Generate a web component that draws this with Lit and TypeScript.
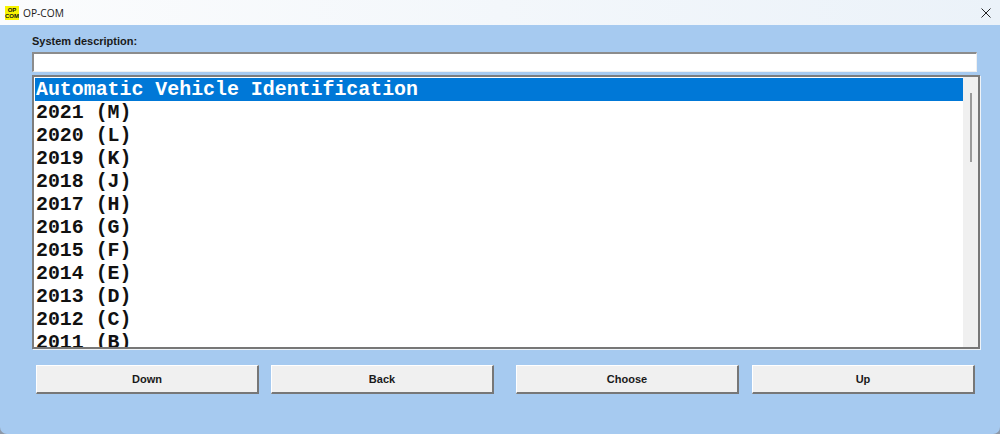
import { LitElement, html, css } from "lit";
import { customElement } from "lit/decorators.js";

const ROWS = ["Automatic Vehicle Identification", "2021 (M)", "2020 (L)", "2019 (K)", "2018 (J)", "2017 (H)", "2016 (G)", "2015 (F)", "2014 (E)", "2013 (D)", "2012 (C)", "2011 (B)"];

@customElement("app-root")
export class AppRoot extends LitElement {
  static styles = css`
    :host { display: block; width: 1000px; height: 434px; background: #8d99a8; overflow: hidden; font-family: "Liberation Sans", Arial, sans-serif; }
    .win { height: 434px; box-sizing: border-box; border-radius: 0 0 7px 7px; background: #a6caf0; display: flex; flex-direction: column; overflow: hidden; }
    .title { height: 25px; flex: none; background: linear-gradient(90deg, #fbfcfd, #ebf2f9); display: flex; align-items: center; padding-left: 5px; gap: 4px; font-family: "Open Sans", "Noto Sans", sans-serif; font-size: 10.2px; color: #1a1a1a; }
    .logo { width: 14px; height: 14px; background: #f8f400; color: #111; font: bold 6px/6px "Liberation Sans", sans-serif; text-align: center; overflow: hidden; display: flex; flex-direction: column; justify-content: center; }
    .close { margin-left: auto; width: 10px; height: 10px; margin-right: 9px; }
    .close svg { display: block; }
    .body { flex: 1; padding: 10px 20px 0 32px; display: flex; flex-direction: column; }
    label { font-size: 11px; font-weight: bold; color: #1a1a1a; line-height: 13px; height: 17px; display: block; }
    .input { height: 20px; width: 945px; box-sizing: border-box; background: #fff; border-top: 2px solid #8c8c8c; border-left: 2px solid #8c8c8c; border-right: 1px solid #f0f0f0; border-bottom: 1px solid #f0f0f0; }
    .list { margin-top: 3px; height: 274px; width: 948px; box-sizing: border-box; background: #fff; border: 2px solid #7d7d7d; border-right-color: #777; border-bottom-color: #777; box-shadow: 1px 1px 0 #eef3f8; padding: 1px 0 0 1px; display: flex; overflow: hidden; }
    .rows { flex: 1; min-width: 0; height: 100%; overflow: hidden; font: bold 19.9px/23px "Liberation Mono", "Courier New", monospace; color: #111; }
    .row { height: 23px; padding-left: 1px; white-space: pre; }
    .row.sel { background: #0078d7; color: #fff; }
    .scroll { width: 15px; flex: none; margin-top: -1px; background: #f0f0f0; display: flex; justify-content: center; padding-top: 16px; height: 100%; }
    .thumb { width: 2px; height: 69px; background: #9a9a9a; }
    .btns { margin-top: 16px; display: flex; padding-left: 4px; }
    button { width: 223px; height: 29px; box-sizing: border-box; background: #f0f0f0; border: 0; border-top: 1px solid #fff; border-left: 1px solid #fff; border-right: 2px solid #777; border-bottom: 2px solid #777; padding: 0; font: bold 11px "Liberation Sans", sans-serif; color: #1a1a1a; flex: none; }
    .g12 { width: 12px; flex: none; }
    .g22 { width: 22px; flex: none; }
    .g13 { width: 13px; flex: none; }
  `;

  render() {
    return html`
      <div class="win">
        <div class="title">
          <div class="logo"><span>OP</span><span>COM</span></div>
          <span>OP-COM</span>
          <div class="close"><svg width="10" height="10" viewBox="0 0 10 10"><path d="M0.5 0.5L9.5 9.5M9.5 0.5L0.5 9.5" stroke="#222" stroke-width="1" fill="none"/></svg></div>
        </div>
        <div class="body">
          <label>System description:</label>
          <div class="input"></div>
          <div class="list">
            <div class="rows">
              ${ROWS.map((r, i) => html`<div class="row ${i === 0 ? "sel" : ""}">${r}</div>`)}
            </div>
            <div class="scroll"><div class="thumb"></div></div>
          </div>
          <div class="btns">
            <button>Down</button><span class="g12"></span>
            <button>Back</button><span class="g22"></span>
            <button>Choose</button><span class="g13"></span>
            <button>Up</button>
          </div>
        </div>
      </div>
    `;
  }
}
